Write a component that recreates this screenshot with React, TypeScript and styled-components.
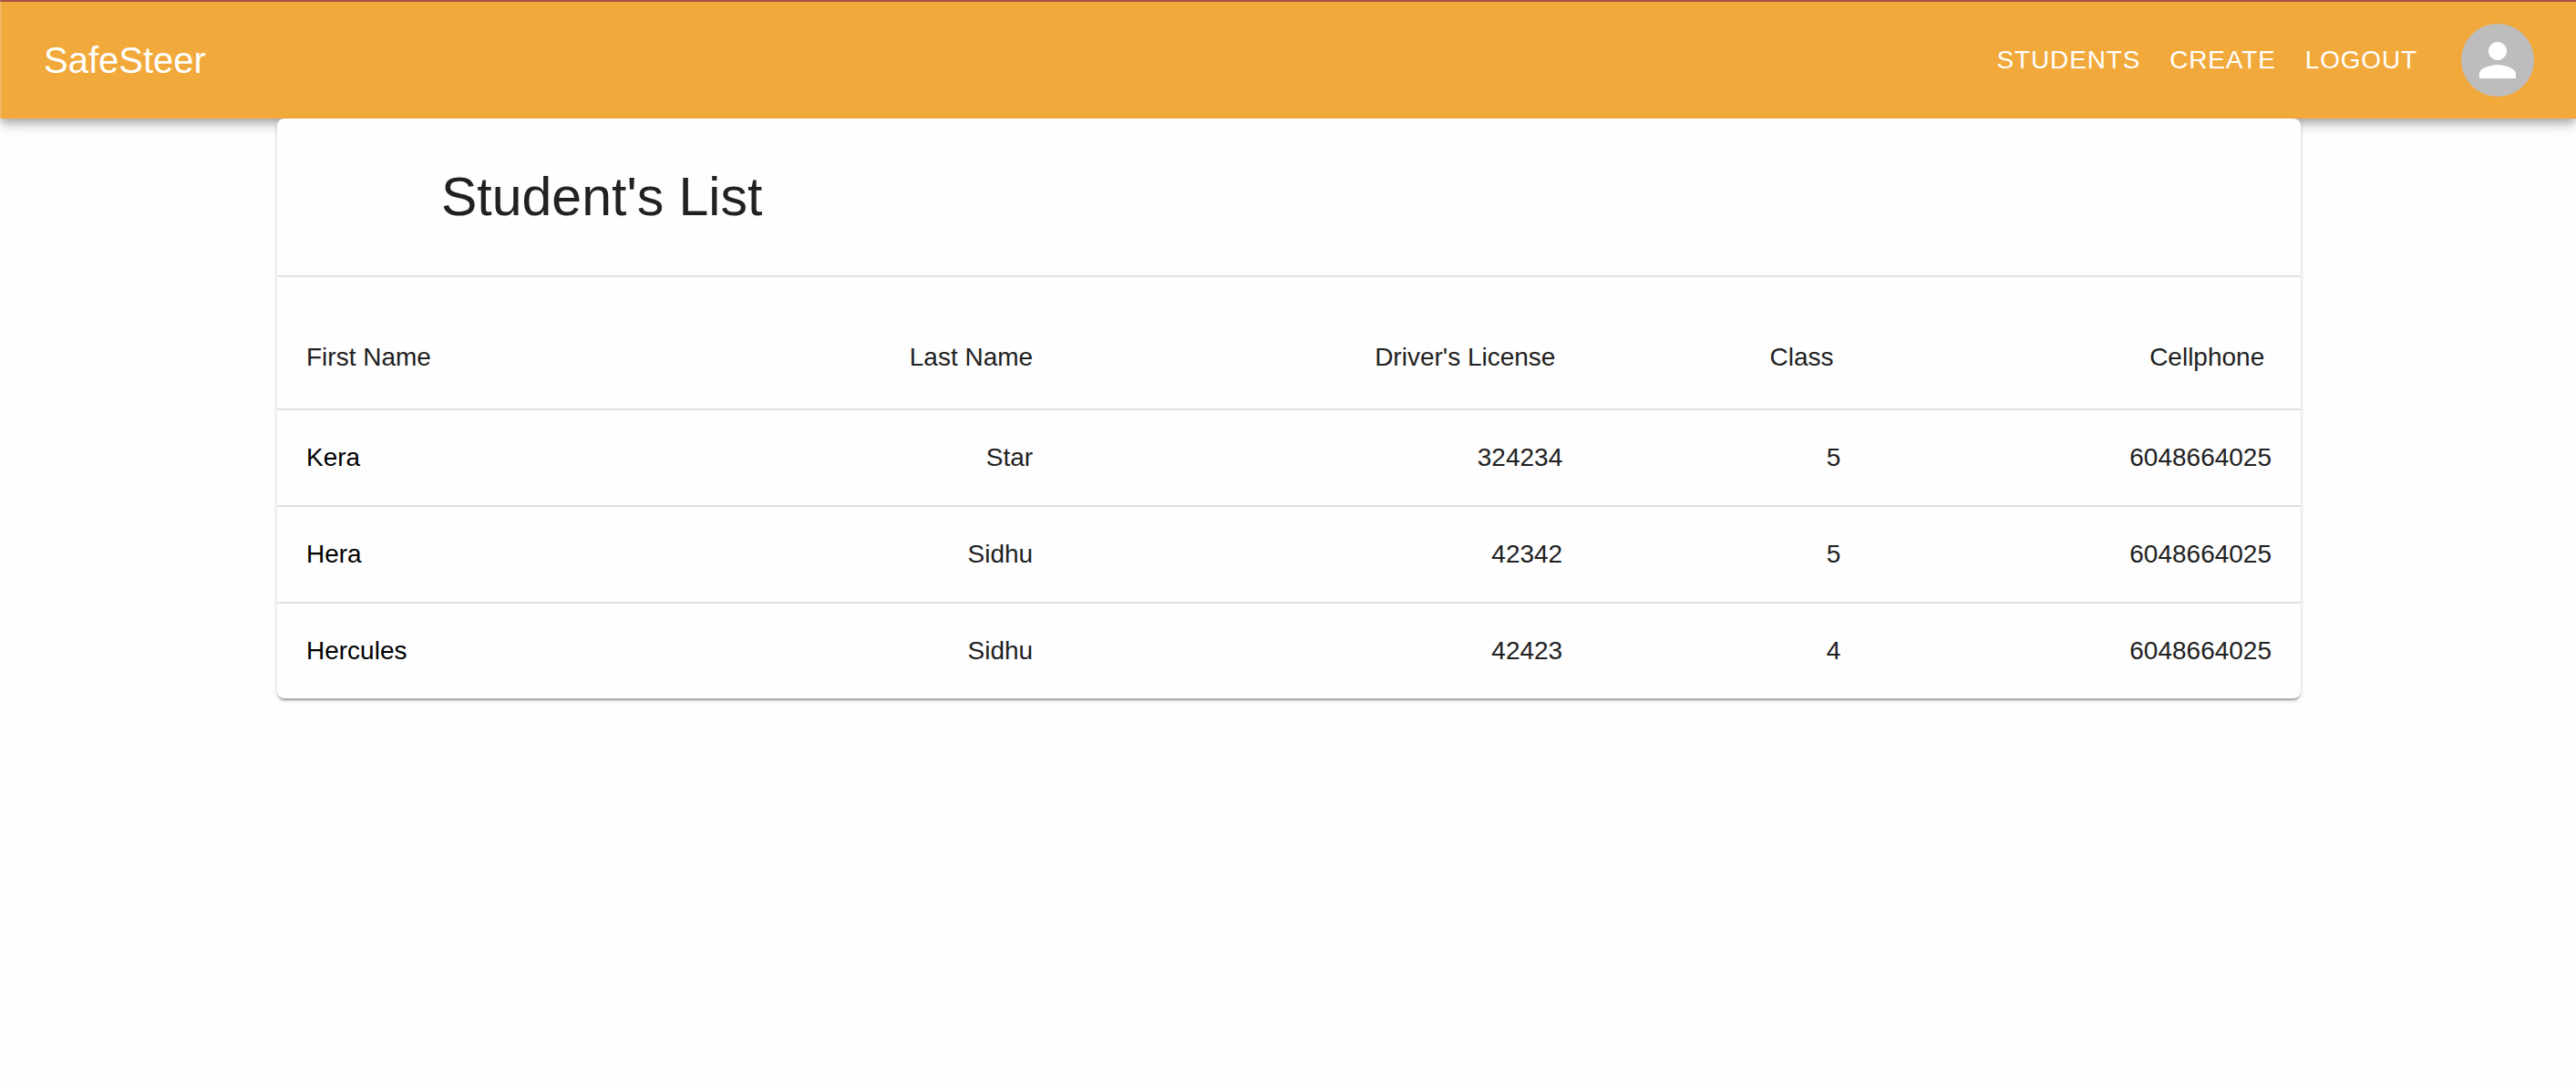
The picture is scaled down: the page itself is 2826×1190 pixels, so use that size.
import React from "react";
import styled, { createGlobalStyle } from "styled-components";

const GlobalStyle = createGlobalStyle`
  *, *::before, *::after {
    box-sizing: border-box;
  }
  body {
    margin: 0;
    background: #fefefe;
    color: #212121;
    font-family: "Liberation Sans", Arial, Helvetica, sans-serif;
    font-size: 28px;
    line-height: 40px;
  }
`;

const Page = styled.div`
  min-height: 100vh;
  border-top: 2px solid #b1564f;
`;

const AppBar = styled.header`
  display: flex;
  align-items: center;
  min-height: 128px;
  padding: 0 46px;
  border-left: 2px solid #f4b661;
  background: #f2a93b;
  color: #fff;
  box-shadow:
    0 4px 8px -2px rgba(0, 0, 0, 0.2),
    0 8px 10px 0 rgba(0, 0, 0, 0.14),
    0 2px 20px 0 rgba(0, 0, 0, 0.12);
`;

const Brand = styled.a`
  flex: 1;
  color: inherit;
  font-size: 40px;
  line-height: 64px;
  text-decoration: none;
`;

const Nav = styled.nav`
  display: flex;
  margin-right: 32px;
`;

const NavLink = styled.a`
  padding: 12px 16px;
  color: inherit;
  letter-spacing: 0.03em;
  line-height: 48px;
  text-decoration: none;
`;

const Avatar = styled.button`
  display: flex;
  align-items: center;
  justify-content: center;
  width: 80px;
  height: 80px;
  padding: 0;
  border: 0;
  border-radius: 50%;
  background: #bdbdbd;
  color: #fff;
  cursor: pointer;
`;

const Main = styled.main`
  padding: 0 302px 48px 304px;
`;

const Card = styled.section`
  position: relative;
  border-radius: 8px;
  background: #fefefe;
  box-shadow:
    0 4px 2px -2px rgba(0, 0, 0, 0.2),
    0 2px 2px 0 rgba(0, 0, 0, 0.14),
    0 2px 6px 0 rgba(0, 0, 0, 0.12);
`;

const CardHeader = styled.div`
  padding: 46px 180px;
  border-bottom: 2px solid #e4e4e4;
`;

const Title = styled.h1`
  margin: 0;
  font-size: 59px;
  font-weight: 400;
  line-height: 80px;
`;

const Table = styled.table`
  width: 100%;
  border-collapse: separate;
  border-spacing: 0;
`;

const HeadCell = styled.th<{ $align?: "left" | "right" }>`
  padding: 68px 32px 36px;
  border-bottom: 2px solid #e0e0e0;
  font-weight: 400;
  text-align: ${({ $align = "right" }) => $align};
`;

const Row = styled.tr`
  &:not(:last-child) > * {
    border-bottom: 2px solid #e0e0e0;
  }
`;

const NameCell = styled.th`
  padding: 32px;
  color: #000;
  font-weight: 400;
  text-align: left;
`;

const Cell = styled.td`
  padding: 32px;
  text-align: right;
`;

const students = [
  { first: "Kera", last: "Star", license: "324234", level: 5, phone: "6048664025" },
  { first: "Hera", last: "Sidhu", license: "42342", level: 5, phone: "6048664025" },
  { first: "Hercules", last: "Sidhu", license: "42423", level: 4, phone: "6048664025" },
];

function PersonIcon() {
  return (
    <svg width="60" height="60" viewBox="0 0 24 24" fill="currentColor" aria-hidden="true">
      <path d="M12 12c2.21 0 4-1.79 4-4s-1.79-4-4-4-4 1.79-4 4 1.79 4 4 4zm0 2c-2.67 0-8 1.34-8 4v2h16v-2c0-2.66-5.33-4-8-4z" />
    </svg>
  );
}

export default function App() {
  return (
    <Page>
      <GlobalStyle />
      <AppBar>
        <Brand href="#">SafeSteer</Brand>
        <Nav>
          <NavLink href="#students">STUDENTS</NavLink>
          <NavLink href="#create">CREATE</NavLink>
          <NavLink href="#logout">LOGOUT</NavLink>
        </Nav>
        <Avatar type="button" aria-label="Account">
          <PersonIcon />
        </Avatar>
      </AppBar>
      <Main>
        <Card>
          <CardHeader>
            <Title>Student's List</Title>
          </CardHeader>
          <Table>
            <thead>
              <tr>
                <HeadCell scope="col" $align="left">First Name</HeadCell>
                <HeadCell scope="col">Last Name</HeadCell>
                <HeadCell scope="col">Driver's License&nbsp;</HeadCell>
                <HeadCell scope="col">Class&nbsp;</HeadCell>
                <HeadCell scope="col">Cellphone&nbsp;</HeadCell>
              </tr>
            </thead>
            <tbody>
              {students.map((s) => (
                <Row key={s.first}>
                  <NameCell scope="row">{s.first}</NameCell>
                  <Cell>{s.last}</Cell>
                  <Cell>{s.license}</Cell>
                  <Cell>{s.level}</Cell>
                  <Cell>{s.phone}</Cell>
                </Row>
              ))}
            </tbody>
          </Table>
        </Card>
      </Main>
    </Page>
  );
}
